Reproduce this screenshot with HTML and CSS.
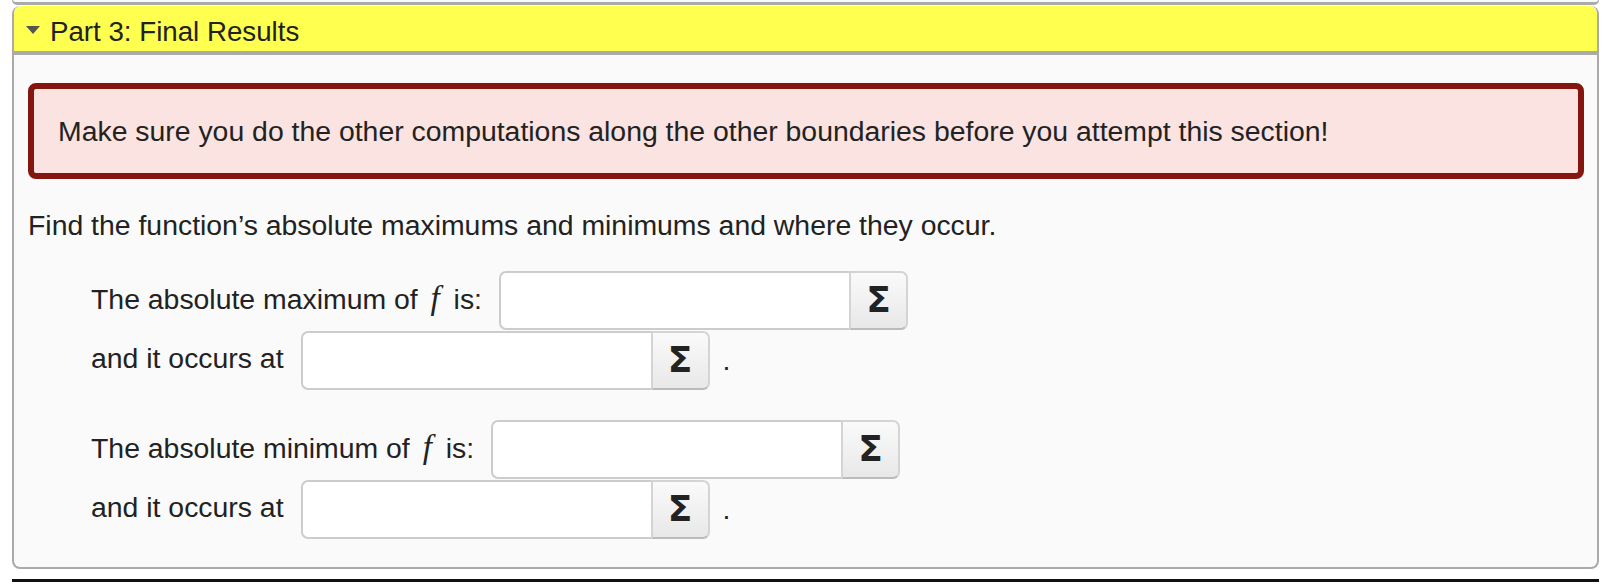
FILE: index.html
```html
<!DOCTYPE html>
<html lang="en">
<head>
<meta charset="utf-8">
<title>Part 3: Final Results</title>
<link rel="stylesheet" href="styles.css">
</head>
<body>
<div class="prev-panel"></div>
<section class="panel">
  <header class="panel-head"><span class="caret"></span><span>Part 3: Final Results</span></header>
  <div class="panel-body">
    <div class="alert">Make sure you do the other computations along the other boundaries before you attempt this section!</div>
    <p class="prompt">Find the function’s absolute maximums and minimums and where they occur.</p>
    <div class="answers">
      <div class="row"><span class="label">The absolute maximum of <i class="math">f</i> is:</span><span class="field"><span class="input input-wide"></span><span class="sigma">Σ</span></span></div>
      <div class="row"><span class="label">and it occurs at</span><span class="field"><span class="input"></span><span class="sigma">Σ</span></span><span class="dot">.</span></div>
      <div class="row row-gap"><span class="label">The absolute minimum of <i class="math">f</i> is:</span><span class="field"><span class="input input-wide"></span><span class="sigma">Σ</span></span></div>
      <div class="row"><span class="label">and it occurs at</span><span class="field"><span class="input"></span><span class="sigma">Σ</span></span><span class="dot">.</span></div>
    </div>
  </div>
</section>
<div class="rule"></div>
</body>
</html>
```
FILE: styles.css
```css
* { box-sizing: border-box; }
html, body { margin: 0; background: #ffffff; }
body {
  width: 1604px;
  height: 588px;
  padding: 0 5px 0 12px;
  overflow: hidden;
  font-family: "Liberation Sans", Arial, sans-serif;
  font-size: 28.4px;
  color: #222222;
}
.prev-panel {
  height: 5px;
  border-bottom: 3px solid #aaaaaa;
  border-left: 1px solid #aaaaaa;
  border-right: 1px solid #aaaaaa;
  border-radius: 0 0 6px 6px;
  background: #fafafa;
}
.panel {
  height: 563px;
  margin-top: 1px;
  border: 2px solid #aaaaaa;
  border-top-width: 0;
  border-radius: 8px;
  background: #fafafa;
}
.panel-head {
  display: flex;
  align-items: center;
  height: 49px;
  padding: 7px 0 0 12px;
  border-bottom: 4px solid #aaaaaa;
  border-radius: 8px 8px 0 0;
  background: #ffff50;
  font-size: 27.7px;
}
.caret {
  width: 0;
  height: 0;
  margin-right: 10px;
  margin-top: -5px;
  border-left: 7px solid transparent;
  border-right: 7px solid transparent;
  border-top: 8px solid #555555;
}
.panel-body { padding: 28px 13px 0 14px; }
.alert {
  display: flex;
  align-items: center;
  height: 96px;
  padding: 0 0 0 24px;
  border: 6px solid #84150f;
  border-radius: 8px;
  background: #fae3e0;
}
.prompt { margin: 26px 0 0; line-height: 40px; }
.answers { margin-top: 25px; padding-left: 63px; }
.row { display: flex; align-items: center; height: 60px; }
.row-gap { margin-top: 29px; }
.label { position: relative; top: -2px; }
.math { font-family: "Liberation Serif", serif; font-size: 33px; margin: 0 6px 0 5px; }
.field { display: flex; height: 59px; margin-left: 17px; }
.input {
  width: 350px;
  height: 59px;
  border: 2px solid #cccccc;
  border-right-width: 0;
  border-radius: 7px 0 0 7px;
  background: #ffffff;
}
.sigma {
  display: flex;
  align-items: center;
  justify-content: center;
  width: 59px;
  height: 59px;
  padding-bottom: 2px;
  border: 2px solid #d4d4d4;
  border-bottom-color: #bbbbbb;
  border-radius: 0 7px 7px 0;
  background: linear-gradient(#fafafa, #e8e8e8);
  font-family: "DejaVu Sans", sans-serif;
  font-weight: bold;
  font-size: 36px;
  color: #222222;
}
.dot { margin-left: 13px; }
.rule { height: 3px; margin-top: 10px; background: #111111; }
```
